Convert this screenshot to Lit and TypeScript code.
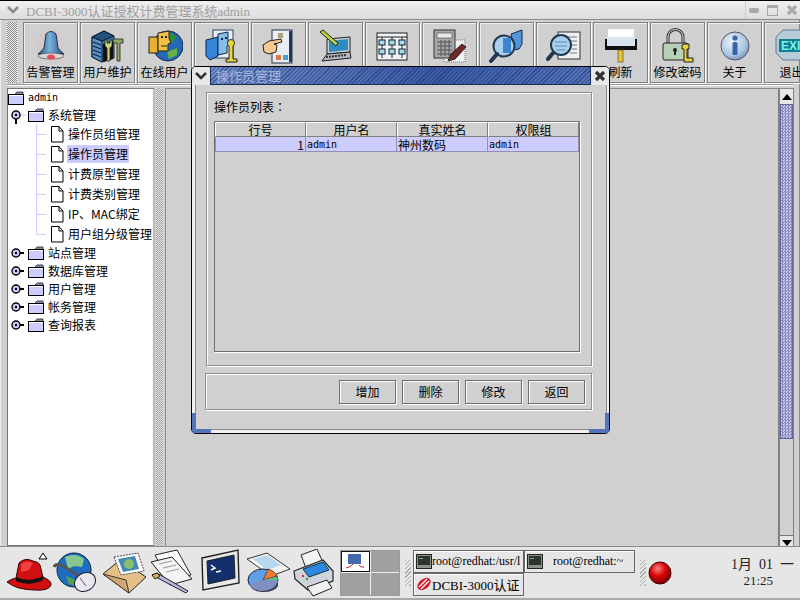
import { LitElement, html, css, svg } from "lit";
import { customElement } from "lit/decorators.js";

const CJK = `"Noto Sans CJK SC", sans-serif`;

// toolbar icons, all in a 36x36 box
const toolIcons = [
  // bell
  svg`<defs><linearGradient id="b1" x1="0" x2="1"><stop offset="0" stop-color="#24507c"/><stop offset=".45" stop-color="#7ab2dc"/><stop offset="1" stop-color="#1f4a78"/></linearGradient></defs>
    <path d="M4 22 Q2 4 18 0 Q34 4 32 22 L30 33 L6 33Z" fill="#d8c4c4" opacity=".55"/>
    <path d="M13 6 Q18 1 23 6 L25 20 Q28 24 31 26 L5 26 Q8 24 11 20Z" fill="url(#b1)" stroke="#1c3450"/>
    <ellipse cx="18" cy="28" rx="13" ry="3" fill="#d8d8d8" stroke="#555" stroke-width=".7"/>
    <ellipse cx="18" cy="29" rx="4" ry="2.5" fill="#e84a5a"/>`,
  // server with tools
  svg`<path d="M2 9 L14 3 L24 8 L24 30 L12 34 L2 29Z" fill="#3c78b0" stroke="#0a1c30"/>
    <path d="M12 13 L12 34 L2 29 L2 9Z" fill="#5a90c4" stroke="#0a1c30"/>
    <path d="M2 9 L14 3 L24 8 L12 13Z" fill="#24507e" stroke="#0a1c30"/>
    <path d="M3 14 L11 17 M3 18 L11 21 M3 22 L11 25 M3 26 L11 29" stroke="#123" stroke-width="1.2"/>
    <path d="M13 16 L23 13 L23 31 L13 34Z" fill="#111"/>
    <path d="M15 12 L15 18 L17 20 L17 33 L20 33 L20 20 L22 18 L22 12 L20 12 L20 15 L17 15 L17 12Z" fill="#c8d078" stroke="#222" stroke-width=".8"/>
    <path d="M23 11 L33 11 L33 15 L30 15 L30 33 L27 33 L27 15 L23 15Z" fill="#8ea860" stroke="#222" stroke-width=".8"/>`,
  // online users globe
  svg`<circle cx="21" cy="18" r="15" fill="#2468b8" stroke="#102848"/>
    <path d="M16 6 Q24 3 30 9 L26 14 L20 13 L17 16 L13 12Z" fill="#2c8c40"/>
    <path d="M20 24 L30 20 L30 27 L22 31Z" fill="#68b040"/>
    <rect x="2" y="9" width="9" height="16" fill="#e8b030" stroke="#222"/>
    <path d="M11 5 L22 3 L22 10 L24 15 L21 16 L21 23 L11 23Z" fill="#f0c040" stroke="#222"/>
    <rect x="14" y="8" width="2" height="2" fill="#222"/><rect x="18" y="8" width="2" height="2" fill="#222"/>
    <path d="M14 18 L20 18" stroke="#222"/>`,
  // blue faces with key
  svg`<rect x="9" y="2" width="20" height="28" fill="#e8eef8" stroke="#304060"/>
    <path d="M2 12 L14 9 L14 28 L6 32 L2 28Z" fill="#3484d8" stroke="#102848"/>
    <path d="M14 6 L24 4 L24 13 L26 17 L23 18 L23 25 L14 27Z" fill="#84bcec" stroke="#102848"/>
    <rect x="17" y="10" width="2" height="2" fill="#102848"/><rect x="21" y="9" width="2" height="2" fill="#102848"/>
    <path d="M25 18 a3.5 3.5 0 1 1 4 0 L29 31 L33 31 L33 34 L22 34 L22 31 L25 31Z" fill="#e8d840" stroke="#222"/>`,
  // hand pointing at chart
  svg`<rect x="11" y="2" width="20" height="33" fill="#e8eef4" stroke="#203040"/>
    <rect x="28" y="3" width="3" height="31" fill="#183868"/>
    <rect x="17" y="5" width="5" height="5" fill="#a8a078"/>
    <rect x="15" y="27" width="5" height="5" fill="#e07840"/><rect x="22" y="27" width="5" height="5" fill="#40a0d0"/>
    <path d="M2 17 L8 13 L20 11 L21 14 L13 16 L16 17 L15 24 L8 26 L3 24Z" fill="#f4c890" stroke="#222"/>`,
  // laptop with pen
  svg`<path d="M9 11 L32 9 L32 24 L9 26Z" fill="#c8d0d8" stroke="#222"/>
    <path d="M11 13 L30 11 L30 22 L11 24Z" fill="#2c8cc0"/>
    <path d="M9 26 L32 24 L33 30 L4 33Z" fill="#b0b8c0" stroke="#222"/>
    <path d="M8 29 L28 27" stroke="#333" stroke-width="2" stroke-dasharray="2 1"/>
    <path d="M2 4 L5 2 L20 15 L18 18Z" fill="#b8d040" stroke="#222"/>`,
  // tree chart on a page
  svg`<rect x="2" y="5" width="30" height="27" fill="#eef2f6" stroke="#222"/>
    <path d="M2 9 L32 9" stroke="#222"/>
    <path d="M7 9 V30 M17 9 V30 M27 9 V30" stroke="#222"/>
    <g fill="#a8dce8" stroke="#123"><rect x="4" y="12" width="6" height="5"/><rect x="4" y="21" width="6" height="5"/><rect x="14" y="12" width="6" height="5"/><rect x="14" y="21" width="6" height="5"/><rect x="24" y="12" width="6" height="5"/><rect x="24" y="21" width="6" height="5"/></g>`,
  // calculator and pencil
  svg`<rect x="12" y="12" width="21" height="22" fill="#f0f0f0" stroke="#777" stroke-dasharray="1 1"/>
    <rect x="2" y="2" width="21" height="28" fill="#a8a8a8" stroke="#333"/>
    <rect x="5" y="5" width="15" height="5" fill="#e8e8e8" stroke="#444" stroke-width=".6"/>
    <path d="M5 14 H20 M5 18 H20 M5 22 H20 M5 26 H20 M9 12 V28 M13 12 V28 M17 12 V28" stroke="#555"/>
    <path d="M16 33 L19 26 L30 16 L34 19 L23 31Z" fill="#702828" stroke="#222"/>`,
  // magnifier over faces
  svg`<path d="M22 6 L33 2 L33 16 L30 21 L25 22Z" fill="#5494d8" stroke="#102848"/>
    <circle cx="15" cy="18" r="10.5" fill="#a8d0ec" stroke="#203850" stroke-width="2"/>
    <rect x="14" y="10" width="8" height="15" fill="#3c84cc"/>
    <path d="M8 26 L2 33" stroke="#203850" stroke-width="4" stroke-linecap="round"/>`,
  // magnifier over document
  svg`<rect x="12" y="4" width="22" height="27" fill="#eceff4" stroke="#333"/>
    <path d="M18 9 H31 M24 13 H31 M26 17 H31 M26 21 H31 M24 25 H31" stroke="#778"/>
    <circle cx="15" cy="17" r="10" fill="#a8d0ec" stroke="#203850" stroke-width="2"/>
    <path d="M9 14 H21 M9 18 H21 M10 22 H19" stroke="#5c88b0"/>
    <path d="M7 25 L2 31" stroke="#203850" stroke-width="4" stroke-linecap="round"/>`,
  // paint roller
  svg`<rect x="5" y="1" width="26" height="8" fill="#fff"/>
    <rect x="4" y="9" width="28" height="9" fill="#d8e4f0"/>
    <rect x="2" y="11" width="2" height="10" fill="#111"/><rect x="32" y="11" width="2" height="10" fill="#111"/>
    <rect x="2" y="18" width="32" height="4" fill="#111"/>
    <rect x="15" y="22" width="5" height="12" fill="#e8c030" stroke="#443" stroke-width=".6"/>`,
  // padlock and key
  svg`<path d="M8 16 V9 a7.5 7.5 0 0 1 15 0 V16" fill="none" stroke="#333" stroke-width="3"/>
    <path d="M8 16 V9 a7.5 7.5 0 0 1 15 0 V16" fill="none" stroke="#ddd" stroke-width="1"/>
    <rect x="3" y="15" width="25" height="17" rx="2" fill="#b8d0b8" stroke="#222"/>
    <circle cx="15" cy="22" r="2" fill="#222"/><rect x="14" y="22" width="2" height="5" fill="#222"/>
    <path d="M24 16 h5 v5 h-2 v9 h6 v4 h-9 v-13 h-2 v-4Z" fill="#e8d040" stroke="#222"/>`,
  // info
  svg`<defs><radialGradient id="i1" cx=".4" cy=".35" r=".7"><stop offset="0" stop-color="#eef4fa"/><stop offset=".7" stop-color="#a8c4e0"/><stop offset="1" stop-color="#7090b8"/></radialGradient></defs>
    <circle cx="18" cy="18" r="14" fill="url(#i1)" stroke="#556"/>
    <circle cx="18" cy="10" r="2.6" fill="#3864a8"/><rect x="15.5" y="14" width="5" height="13" rx="1.5" fill="#3864a8"/>`,
  // exit sign
  svg`<path d="M9 2 H27 L34 9 V25 L27 32 H9 L2 25 V9Z" fill="#b8ccd8" stroke="#607890"/>
    <rect x="5" y="11" width="28" height="13" fill="#0a8090"/>
    <text x="7" y="22" font-family="Liberation Sans" font-weight="700" font-size="12" fill="#80f0e8">EXIT</text>`,
];

const toolLabels = ["告警管理", "用户维护", "在线用户", "", "", "", "", "", "", "", "刷新", "修改密码", "关于", "退出"];

// gap = space before the icon in the launcher strip
const launchers = [
  // red hat with the little menu arrow
  { w: 47, gap: 1, g: svg`<path d="M2 33 Q6 30 11 29 L14 14 Q20 8 28 12 Q34 13 35 16 L38 28 Q47 32 46 36 Q44 42 30 41 Q12 41 2 33Z" fill="#d01010" stroke="#300" />
    <path d="M11 28 Q24 34 38 27 L38 31 Q24 38 11 32Z" fill="#111"/>
    <path d="M16 15 Q22 11 28 14 L24 21 L16 23Z" fill="#f04040"/>
    <path d="M34 10 L38 4 L42 10Z" fill="#fff" stroke="#000"/>` },
  // globe with mouse
  { w: 46, gap: 0, g: svg`<circle cx="22" cy="21" r="17" fill="#1c6cc0" stroke="#082040"/>
    <path d="M13 8 Q24 3 32 10 L30 18 L22 17 L16 20Z" fill="#88c890"/>
    <path d="M14 27 L24 31 L22 37 L16 34Z" fill="#50a050"/>
    <path d="M2 18 Q4 12 16 20 Q26 26 30 30" fill="none" stroke="#555" stroke-width="3"/>
    <ellipse cx="33" cy="33" rx="11" ry="9" transform="rotate(-30 33 33)" fill="#e8e8f0" stroke="#223"/>
    <path d="M28 29 L34 37" stroke="#556"/>` },
  // mail with stamp
  { w: 50, gap: 2, g: svg`<path d="M3 25 L20 11 L46 28 L29 44Z" fill="#e4c088" stroke="#222"/>
    <path d="M3 25 L26 31 L29 44Z" fill="#d0a870" stroke="#433"/>
    <path d="M14 8 L38 4 L44 22 L21 26Z" fill="#fff" stroke="#445" stroke-dasharray="2 1"/>
    <path d="M18 10 L35 7 L39 20 L23 23Z" fill="#4488b8"/>
    <circle cx="29" cy="15" r="5" fill="#88c070"/>` },
  // papers and pen
  { w: 44, gap: 0, g: svg`<path d="M5 6 L27 1 L41 26 L18 30Z" fill="#fff" stroke="#222"/>
    <path d="M1 13 L22 8 L42 30 L20 36Z" fill="#f4f4f4" stroke="#222"/>
    <path d="M9 15 L22 12 M13 19 L26 16 M16 23 L29 20" stroke="#999"/>
    <path d="M2 26 L7 24 L38 42 L36 44Z" fill="#b8b8e0" stroke="#222"/>
    <path d="M2 26 L7 24 L10 27 L5 30Z" fill="#d8b040" stroke="#222"/>` },
  // terminal
  { w: 44, gap: 6, g: svg`<path d="M2 9 L38 1 L39 34 L3 41Z" fill="#e8e8e8" stroke="#222" stroke-width="1.4"/>
    <path d="M7 12 L34 6 L35 29 L8 35Z" fill="#14306c" stroke="#222"/>
    <path d="M11 16 L15 19 L11 21" fill="none" stroke="#fff" stroke-width="1.5"/><path d="M16 23 L21 22" stroke="#fff" stroke-width="1.5"/>` },
  // sheet and pie
  { w: 46, gap: 1, g: svg`<path d="M2 10 L22 4 L45 20 L26 27Z" fill="#f4f4f4" stroke="#333"/>
    <path d="M8 10 L22 6 L36 16 L22 21Z" fill="#b8d8f0"/>
    <path d="M5 33 V37 Q8 43 18 43 Q30 43 33 37 V33Z" fill="#445" />
    <ellipse cx="18" cy="31" rx="15" ry="11" fill="#60a0e8" stroke="#223"/>
    <path d="M18 31 L23 20 Q30 22 32 27Z" fill="#f07830" stroke="#223" stroke-width=".6"/>
    <path d="M18 31 L32 28 L33 31Z" fill="#60c070"/>
    <path d="M18 31 L33 32 Q30 42 15 42 Q5 40 5 35Z" fill="#8090c0"/>` },
  // printer
  { w: 46, gap: 2, g: svg`<path d="M8 6 L24 0 L31 16 L14 22Z" fill="#f4f4f4" stroke="#222"/>
    <path d="M1 22 L30 11 L40 22 L40 32 L15 41 L2 30Z" fill="#cfd4dc" stroke="#222" stroke-width="1.2"/>
    <path d="M10 20 L30 13 L36 21 L16 28Z" fill="#2c88e0" stroke="#134"/>
    <path d="M14 38 L34 31 L39 39 L20 47Z" fill="#f0f0f0" stroke="#222"/>
    <circle cx="10" cy="27" r="1.2" fill="#d03030"/><circle cx="14" cy="30" r="1.2" fill="#30a030"/>` },
];

const terminalGlyph = svg`<svg width="16" height="15" viewBox="0 0 16 15"><rect x=".5" y=".5" width="15" height="14" fill="#889088" stroke="#222"/><rect x="2" y="2" width="12" height="9" fill="#2c3430"/><rect x="3" y="4" width="4" height="1" fill="#8a8"/></svg>`;

const tree = [
  { kind: "root", label: "admin" },
  { kind: "open", label: "系统管理" },
  { kind: "leaf", label: "操作员组管理" },
  { kind: "leaf", label: "操作员管理", selected: true },
  { kind: "leaf", label: "计费原型管理" },
  { kind: "leaf", label: "计费类别管理" },
  { kind: "leaf", label: "IP、MAC绑定" },
  { kind: "leaf", label: "用户组分级管理", last: true },
  { kind: "closed", label: "站点管理" },
  { kind: "closed", label: "数据库管理" },
  { kind: "closed", label: "用户管理" },
  { kind: "closed", label: "帐务管理" },
  { kind: "closed", label: "查询报表" },
];

@customElement("app-root")
export class AppRoot extends LitElement {
  static styles = css`
    :host {
      display: flex;
      flex-direction: column;
      position: relative;
      width: 800px;
      height: 600px;
      overflow: hidden;
      background: #d0d0d0;
      font: 12px ${css([CJK] as any)};
      color: #000;
    }
    svg { display: block; flex: none; }

    /* main window */
    .window {
      height: 546px;
      flex: none;
      display: flex;
      flex-direction: column;
      border-top: 1px solid #000;
      box-sizing: border-box;
    }
    .titlebar {
      height: 18px;
      flex: none;
      display: flex;
      align-items: center;
      background: linear-gradient(#f0f0f0, #dcdcdc);
      border-bottom: 1px solid #8c8c8c;
      font: 13px "Liberation Serif", "Noto Sans CJK SC", serif;
      color: #a0a0a0;
    }
    .collapse { width: 26px; flex: none; display: flex; justify-content: center; }
    .titlebar .name { flex: 1; }
    .wm-btns { display: flex; align-items: center; gap: 8px; height: 100%; width: 55px; box-sizing: border-box; border-left: 1px solid #ccc; padding-left: 3px; }

    .frame {
      flex: 1;
      min-height: 0;
      display: flex;
      flex-direction: column;
      padding: 2px 5px 0 6px;
      border-left: 1px solid #eee;
      border-right: 1px solid #888;
      background: #d0d0d0;
    }
    .toolbar {
      flex: none;
      height: 63px;
      box-sizing: border-box;
      display: flex;
      gap: 1px;
      padding-bottom: 1px;
      border-bottom: 1px solid #999;
      box-shadow: 0 1px 0 #fff;
    }
    .grip {
      width: 10px;
      flex: none;
      margin-right: 5px;
      background-image: conic-gradient(#8a8a8a 25%, #efefef 0 50%, #8a8a8a 0 75%, #efefef 0);
      background-size: 2px 2px;
    }
    .tool {
      width: 55px;
      flex: none;
      margin-right: 1px;
      box-sizing: border-box;
      border: 1px solid #808080;
      box-shadow: 1px 1px 0 #fff, inset 1px 1px 0 #eee;
      display: flex;
      flex-direction: column;
      align-items: center;
      padding-top: 5px;
      white-space: nowrap;
    }
    .tool .glyph { height: 36px; display: flex; align-items: center; }
    .tool .label { line-height: 16px; }

    .content {
      flex: 1;
      min-height: 0;
      display: flex;
      margin-top: 3px;
    }
    .tree {
      width: 148px;
      flex: none;
      box-sizing: border-box;
      background: #fff;
      border: 1px solid #777;
      border-right: 2px solid #bbb;
      padding-top: 1px;
      overflow: hidden;
    }
    .row { display: flex; align-items: center; height: 18px; white-space: nowrap; }
    .row.child { height: 20px; }
    .row .text { padding: 0 1px; margin-left: 3px; line-height: 18px; }
    .row.root { height: 16px; }
    .row.root .text, .mono { font-family: "DejaVu Sans Mono", "Liberation Mono", monospace; font-size: 10px; }
    .row.selected .text { background: #ccccff; }
    .splitter {
      width: 7px;
      flex: none;
      margin: 0 2px 0 1px;
      background-image: conic-gradient(#999 25%, #eee 0 50%, #999 0 75%, #eee 0);
      background-size: 2px 2px;
    }
    .workspace {
      flex: 1;
      display: flex;
      justify-content: flex-end;
      border-top: 1px solid #888;
      border-left: 1px solid #888;
      min-width: 0;
    }
    .scrollbar {
      width: 16px;
      flex: none;
      box-sizing: border-box;
      display: flex;
      flex-direction: column;
      border-left: 2px solid #808080;
      border-right: 1px solid #808080;
    }
    .scroll-btn { height: 15px; flex: none; background: #e8e8e8; display: flex; align-items: center; justify-content: center; }
    .scroll-btn.down { height: 10px; align-items: flex-end; border-top: 1px solid #777; }
    .thumb {
      height: 335px;
      flex: none;
      box-sizing: border-box;
      border: 1px solid #66669a;
      background-color: #a8a8d8;
      background-image: conic-gradient(#8888c0 25%, #c8c8ec 0 50%, #8888c0 0 75%, #c8c8ec 0);
      background-size: 3px 3px;
    }
    .trough { flex: 1; }

    /* bottom panel */
    .taskbar {
      flex: 1;
      display: flex;
      align-items: center;
      background: #e6e6e6;
      border-top: 1px solid #8c8c8c;
      border-bottom: 2px solid #a8a8a8;
      padding-left: 4px;
      box-sizing: border-box;
    }
    .launcher { display: flex; flex: none; width: 336px; }
    .pager {
      width: 60px;
      height: 46px;
      flex: none;
      display: grid;
      grid-template-columns: 1fr 1fr;
      grid-template-rows: 1fr 1fr;
      gap: 1px;
      background: #eee;
      border: 1px solid #999;
      box-sizing: border-box;
    }
    .pager div { background: #a0a0a0; }
    .pager .on { background: #fff; border: 1px solid #111; box-sizing: border-box; display: flex; justify-content: center; align-items: center; }
    .hatch {
      width: 6px;
      height: 26px;
      flex: none;
      background-image: repeating-linear-gradient(135deg, #aaa 0 1px, transparent 1px 3px);
    }
    .hatch.first { margin-left: 5px; }
    .tasks {
      display: grid;
      grid-template-columns: 111px 111px;
      grid-template-rows: 23px 23px;
      width: 222px;
      flex: none;
      margin: 0 5px 0 2px;
    }
    .task {
      border: 1px solid #666;
      box-shadow: inset 1px 1px 0 #fff;
      box-sizing: border-box;
      display: flex;
      align-items: center;
      padding-left: 2px;
      overflow: hidden;
      white-space: nowrap;
      font: 12px "Liberation Serif", "Noto Sans CJK SC", serif;
    }
    .task.app { font-size: 13px; }
    .task .t { flex: none; }
    .task.wide .t { margin-left: 10px; }
    .ball { margin-left: 2px; }
    .clock {
      flex: 1;
      text-align: right;
      padding-right: 6px;
      font: 13px/16px "Liberation Serif", "Noto Sans CJK SC", serif;
      color: #222;
    }
    .clock .date { font-size: 14px; }
    .clock .time { padding-right: 21px; }

    /* dialog floats over the window */
    .dialog {
      position: absolute;
      left: 191px;
      top: 66px;
      width: 419px;
      height: 368px;
      box-sizing: border-box;
      border: 1px solid #000;
      border-radius: 5px;
      background: #f0f0f0;
      display: flex;
      flex-direction: column;
      padding: 0 2px 3px 3px;
      overflow: hidden;
    }
    .corner { position: absolute; bottom: 0; width: 19px; height: 20px; box-sizing: border-box; border-bottom: 4px solid #5274bc; }
    .corner.l { left: 0; border-left: 4px solid #5274bc; }
    .corner.r { right: 0; width: 20px; border-right: 4px solid #5274bc; }
    .dlg-title {
      height: 18px;
      flex: none;
      display: flex;
      margin: 0 -2px 0 -3px;
      background: #e8e8e8;
    }
    .dlg-btn { width: 18px; flex: none; display: flex; align-items: center; justify-content: center; }
    .dlg-caption {
      flex: 1;
      border: 1px solid #1c2c58;
      border-top: 0;
      box-sizing: border-box;
      padding-left: 5px;
      line-height: 17px;
      font-size: 13px;
      color: #a6b4d8;
      background:
        repeating-linear-gradient(135deg, rgba(20,40,100,.45) 0 1px, transparent 1px 3px),
        linear-gradient(90deg, #6c8ac8, #3a5aa4 60%, #5272b8);
    }
    .dlg-body {
      flex: 1;
      min-height: 0;
      background: #d0d0d0;
      border: 1px solid #888;
      border-top: 0;
      padding: 7px 14px 0 10px;
      display: flex;
      flex-direction: column;
      gap: 7px;
    }
    .group {
      border: 1px solid #909090;
      box-shadow: 1px 1px 0 #fff, inset 1px 1px 0 #fff;
    }
    .list-group {
      height: 274px;
      flex: none;
      box-sizing: border-box;
      padding: 5px 11px 13px 7px;
      display: flex;
      flex-direction: column;
    }
    .list-group .cap { line-height: 18px; margin-bottom: 5px; }
    .list-group .colon { font-family: "Noto Sans CJK TC", sans-serif; }
    .table {
      flex: 1;
      border: 1px solid #707070;
      box-shadow: 1px 1px 0 #fff;
    }
    .grid { display: grid; grid-template-columns: repeat(4, 91px); }
    .th {
      height: 15px;
      line-height: 14px;
      text-align: center;
      box-sizing: border-box;
      border-top: 1px solid #fff;
      border-left: 1px solid #fff;
      border-right: 1px solid #808080;
      border-bottom: 1px solid #808080;
      background: #d0d0d0;
      overflow: hidden;
    }
    .td {
      height: 15px;
      line-height: 13px;
      box-sizing: border-box;
      background: #ccccff;
      border-right: 1px solid #9090b0;
      border-bottom: 1px solid #9090b0;
      padding: 1px 1px 0;
      white-space: nowrap;
      overflow: hidden;
    }
    .td.num { text-align: right; border: 1px solid #9090b0; border-top: 0; }
    .btn-group {
      height: 37px;
      flex: none;
      box-sizing: border-box;
      margin-left: -1px;
      display: flex;
      justify-content: flex-end;
      align-items: center;
      gap: 6px;
      padding-right: 6px;
    }
    .btn {
      width: 57px;
      height: 24px;
      box-sizing: border-box;
      border: 1px solid #6c6c6c;
      box-shadow: 1px 1px 0 #fff, inset 1px 1px 0 #fff;
      display: flex;
      align-items: center;
      justify-content: center;
    }
  `;

  private chevron(color = "#333") {
    return html`<svg width="14" height="10" viewBox="0 0 14 10"><path d="M2 2 L7 7 L12 2" fill="none" stroke=${color} stroke-width="2.6"/></svg>`;
  }

  private cross(color: string) {
    return html`<svg width="12" height="12" viewBox="0 0 12 12"><path d="M2 2 L10 10 M10 2 L2 10" stroke=${color} stroke-width="3.2"/></svg>`;
  }

  private folder() {
    return html`<svg width="16" height="14" viewBox="0 0 16 14"><path d="M7 3 L9 1 L15 1 L15 3" fill="#8888aa" stroke="#445"/><rect x=".5" y="3.5" width="15" height="10" fill="#ccccff" stroke="#000"/><rect x="1" y="4" width="14" height="1" fill="#fff"/></svg>`;
  }

  private doc() {
    return html`<svg width="14" height="17" viewBox="0 0 14 17"><path d="M1.5 .5 H9 L13 5 V16 H1.5Z" fill="#fff" stroke="#000"/><path d="M9 .5 V5 H13" fill="none" stroke="#000"/></svg>`;
  }

  // expander handle with its connector, open or closed
  private expander(open: boolean) {
    return html`<svg width="20" height="18" viewBox="0 0 20 18">
      ${open
        ? svg`<path d="M8 13 V18" stroke="#000" stroke-width="2"/><path d="M12 9 H18" stroke="#ccccff"/>`
        : svg`<path d="M11 9 H16" stroke="#000" stroke-width="2"/>`}
      <circle cx="8" cy="9" r="4" fill="#ccccff" stroke="#000" stroke-width="1.4"/>
      <circle cx="8" cy="9" r="1.2" fill="#000"/>
    </svg>`;
  }

  private connector(last: boolean) {
    return html`<svg width="42" height="20" viewBox="0 0 42 20">
      <path d=${last ? "M28.5 0 V10" : "M28.5 0 V20"} stroke="#ccccff"/>
      <path d="M28 10.5 H38" stroke="#ccccff"/>
    </svg>`;
  }

  private renderRow(r: any) {
    if (r.kind === "root") {
      return html`<div class="row root">${this.folder()}<span class="text">admin</span></div>`;
    }
    if (r.kind === "leaf") {
      return html`<div class="row child ${r.selected ? "selected" : ""}">
        ${this.connector(!!r.last)}${this.doc()}<span class="text">${r.label}</span>
      </div>`;
    }
    return html`<div class="row">${this.expander(r.kind === "open")}${this.folder()}<span class="text">${r.label}</span></div>`;
  }

  render() {
    return html`
      <div class="window">
        <div class="titlebar">
          <div class="collapse">${this.chevron("#8a8a8a")}</div>
          <div class="name">DCBI-3000认证授权计费管理系统admin</div>
          <div class="wm-btns">
            <svg width="10" height="5" viewBox="0 0 10 5"><rect width="10" height="5" rx="2" fill="#a8a8a8"/></svg>
            <svg width="11" height="11" viewBox="0 0 11 11"><rect x=".5" y="1" width="10" height="9.5" fill="none" stroke="#a8a8a8"/><rect width="11" height="3" fill="#a8a8a8"/></svg>
            ${this.cross("#a8a8a8")}
          </div>
        </div>
        <div class="frame">
          <div class="toolbar">
            <div class="grip"></div>
            ${toolIcons.map((g, i) => html`
              <div class="tool">
                <div class="glyph"><svg width="36" height="36" viewBox="0 0 36 36">${g}</svg></div>
                <div class="label">${toolLabels[i]}</div>
              </div>`)}
          </div>
          <div class="content">
            <div class="tree">${tree.map((r) => this.renderRow(r))}</div>
            <div class="splitter"></div>
            <div class="workspace">
              <div class="scrollbar">
                <div class="scroll-btn"><svg width="10" height="6" viewBox="0 0 10 6"><path d="M5 0 L10 6 H0Z"/></svg></div>
                <div class="thumb"></div>
                <div class="trough"></div>
                <div class="scroll-btn down"><svg width="10" height="6" viewBox="0 0 10 6"><path d="M0 0 H10 L5 6Z"/></svg></div>
              </div>
            </div>
          </div>
        </div>
      </div>

      <div class="taskbar">
        <div class="launcher">
          ${launchers.map((l) => html`<svg style="margin-left:${l.gap}px" width=${l.w} height="48" viewBox="0 0 ${l.w} 48">${l.g}</svg>`)}
        </div>
        <div class="pager">
          <div class="on"><svg width="20" height="16" viewBox="0 0 20 16"><rect x="3" y="1" width="13" height="10" fill="#4468b0"/><path d="M1 15 Q6 14 8 11 M14 12 Q16 15 19 14" stroke="#c02020" fill="none"/></svg></div>
          <div></div><div></div><div></div>
        </div>
        <div class="hatch first"></div>
        <div class="tasks">
          <div class="task">${terminalGlyph}<span class="t">root@redhat:/usr/l</span></div>
          <div class="task wide">${terminalGlyph}<span class="t">root@redhat:~</span></div>
          <div class="task app">
            <svg width="16" height="16" viewBox="0 0 16 16"><ellipse cx="8" cy="8" rx="7.5" ry="5" transform="rotate(-40 8 8)" fill="#d02030"/><path d="M3 11 L11 3 M5 13 L13 5" stroke="#fff" stroke-width="1.2"/></svg>
            <span class="t">DCBI-3000认证</span>
          </div>
        </div>
        <div class="hatch"></div>
        <svg class="ball" width="24" height="24" viewBox="0 0 24 24">
          <defs><radialGradient id="ball" cx=".4" cy=".3" r=".75"><stop offset="0" stop-color="#ff8080"/><stop offset=".45" stop-color="#d80808"/><stop offset="1" stop-color="#700000"/></radialGradient></defs>
          <circle cx="12" cy="12" r="11" fill="url(#ball)" stroke="#400"/>
        </svg>
        <div class="clock"><div class="date">1月&nbsp; 01&nbsp; 一</div><div class="time">21:25</div></div>
      </div>

      <div class="dialog">
        <div class="dlg-title">
          <div class="dlg-btn">${this.chevron()}</div>
          <div class="dlg-caption">操作员管理</div>
          <div class="dlg-btn">${this.cross("#333")}</div>
        </div>
        <div class="dlg-body">
          <div class="group list-group">
            <div class="cap">操作员列表<span class="colon">：</span></div>
            <div class="table">
              <div class="grid">
                <div class="th">行号</div><div class="th">用户名</div><div class="th">真实姓名</div><div class="th">权限组</div>
                <div class="td num">1</div><div class="td mono">admin</div><div class="td">神州数码</div><div class="td mono">admin</div>
              </div>
            </div>
          </div>
          <div class="group btn-group">
            <div class="btn">增加</div><div class="btn">删除</div><div class="btn">修改</div><div class="btn">返回</div>
          </div>
        </div>
        <div class="corner l"></div>
        <div class="corner r"></div>
      </div>
    `;
  }
}
